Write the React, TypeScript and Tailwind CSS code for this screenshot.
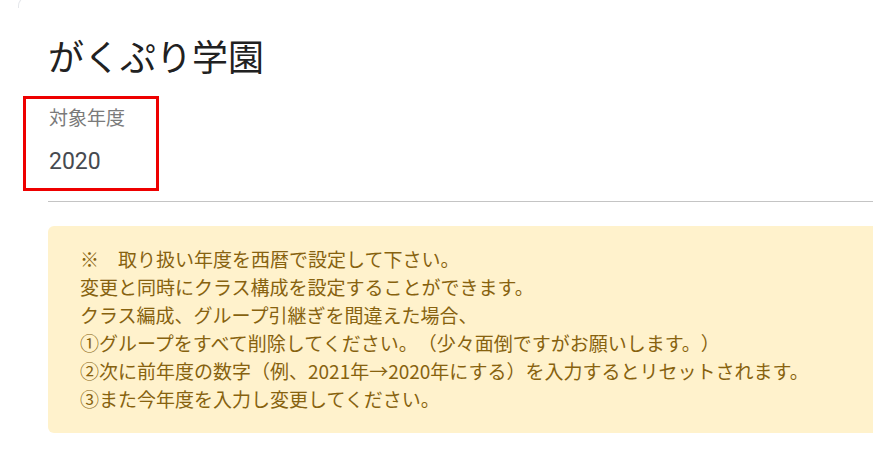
const NOTES = [
  '※　取り扱い年度を西暦で設定して下さい。',
  '変更と同時にクラス構成を設定することができます。',
  'クラス編成、グループ引継ぎを間違えた場合、',
  '①グループをすべて削除してください。（少々面倒ですがお願いします。）',
  '②次に前年度の数字（例、2021年→2020年にする）を入力するとリセットされます。',
  '③また今年度を入力し変更してください。',
]

export default function App() {
  return (
    <div className="relative h-[461px] w-[873px] overflow-hidden bg-white font-['Roboto','Noto_Sans_CJK_JP',sans-serif] [text-spacing-trim:space-all]">
      {/* faint card corner at the top */}
      <div className="absolute left-[18px] top-[-4px] h-[12px] w-[24px] rounded-tl-[10px] border-l border-t border-gray-200" />

      <div className="w-[920px] pl-12 pt-[33px]">
        <h1 className="text-[36px] leading-[44px] text-[#212121] font-['Noto_Sans_CJK_JP',sans-serif]">
          がくぷり学園
        </h1>

        <div className="mt-[19px] -ml-[25px] w-[136px] border-[3px] border-[#ee0000] pl-[23px] pt-[6px] pb-[12px]">
          <div className="text-[19px] leading-[24px] text-[#7a7a7a] font-['Noto_Sans_CJK_JP',sans-serif]">対象年度</div>
          <div className="mt-[19px] text-[23px] leading-[28px] text-[#464a50]">2020</div>
        </div>

        <div className="mt-[10px] h-px bg-[#c4c4c4]" />

        <div className="mt-[24px] rounded-[6px] bg-[#fff2cc] pl-8 pt-[19px] pb-[20px] text-[19px] leading-[28px] text-[#87620f] font-['Noto_Sans_CJK_JP',sans-serif]">
          {NOTES.map((line) => (
            <div key={line}>{line}</div>
          ))}
        </div>
      </div>
    </div>
  )
}
